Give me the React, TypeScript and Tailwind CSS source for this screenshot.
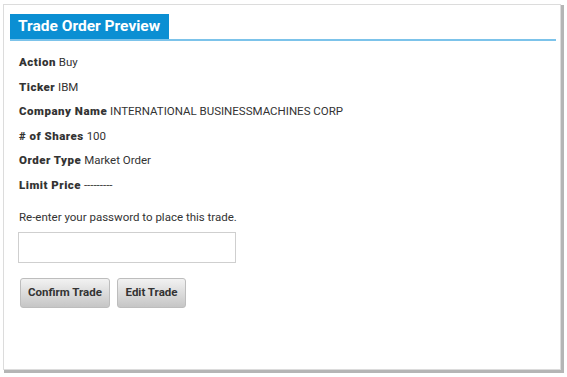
const rows: [string, string][] = [
  ["Action", "Buy"],
  ["Ticker", "IBM"],
  ["Company Name", "INTERNATIONAL BUSINESSMACHINES CORP"],
  ["# of Shares", "100"],
  ["Order Type", "Market Order"],
  ["Limit Price", "---------"],
];

export default function App() {
  return (
    <div className="w-[567px] h-[377px] bg-white pl-[3px] pt-[4px] font-['Roboto',sans-serif] text-[#333]">
      <div className="w-[558px] h-[366px] bg-white border border-[#dcdcdc] shadow-[2px_2px_0_1px_#b5b5b5] pt-[9px] px-[6px]">
        <div className="border-b-2 border-[#7cc3ea] w-[546px]">
          <div className="inline-block bg-[#0b8fd3] text-white font-bold text-[15.5px] leading-[25px] px-[8px] w-[159px]">
            Trade Order Preview
          </div>
        </div>
        <div className="pl-[9px] pt-[14px]">
          {rows.map(([label, value]) => (
            <div key={label} className="text-[11.5px] leading-[14px] mb-[10.5px] whitespace-nowrap">
              <span className="font-black tracking-[0.5px]">{label}</span> {value}
            </div>
          ))}
          <p className="text-[11.5px] leading-[14px] mt-[18px]">Re-enter your password to place this trade.</p>
          <input
            type="password"
            className="block mt-[8px] -ml-[1px] w-[218px] h-[31px] border border-[#cfcfcf] bg-white outline-none"
          />
          <div className="flex gap-[7px] mt-[15px] ml-[1px]">
            <button className="h-[30px] w-[90px] whitespace-nowrap rounded-[3px] border border-[#bdbdbd] bg-gradient-to-b from-[#f2f2f2] to-[#c6c6c6] font-bold text-[11.5px] text-[#333]">
              Confirm Trade
            </button>
            <button className="h-[30px] w-[69px] whitespace-nowrap rounded-[3px] border border-[#bdbdbd] bg-gradient-to-b from-[#f2f2f2] to-[#c6c6c6] font-bold text-[11.5px] text-[#333]">
              Edit Trade
            </button>
          </div>
        </div>
      </div>
    </div>
  );
}
